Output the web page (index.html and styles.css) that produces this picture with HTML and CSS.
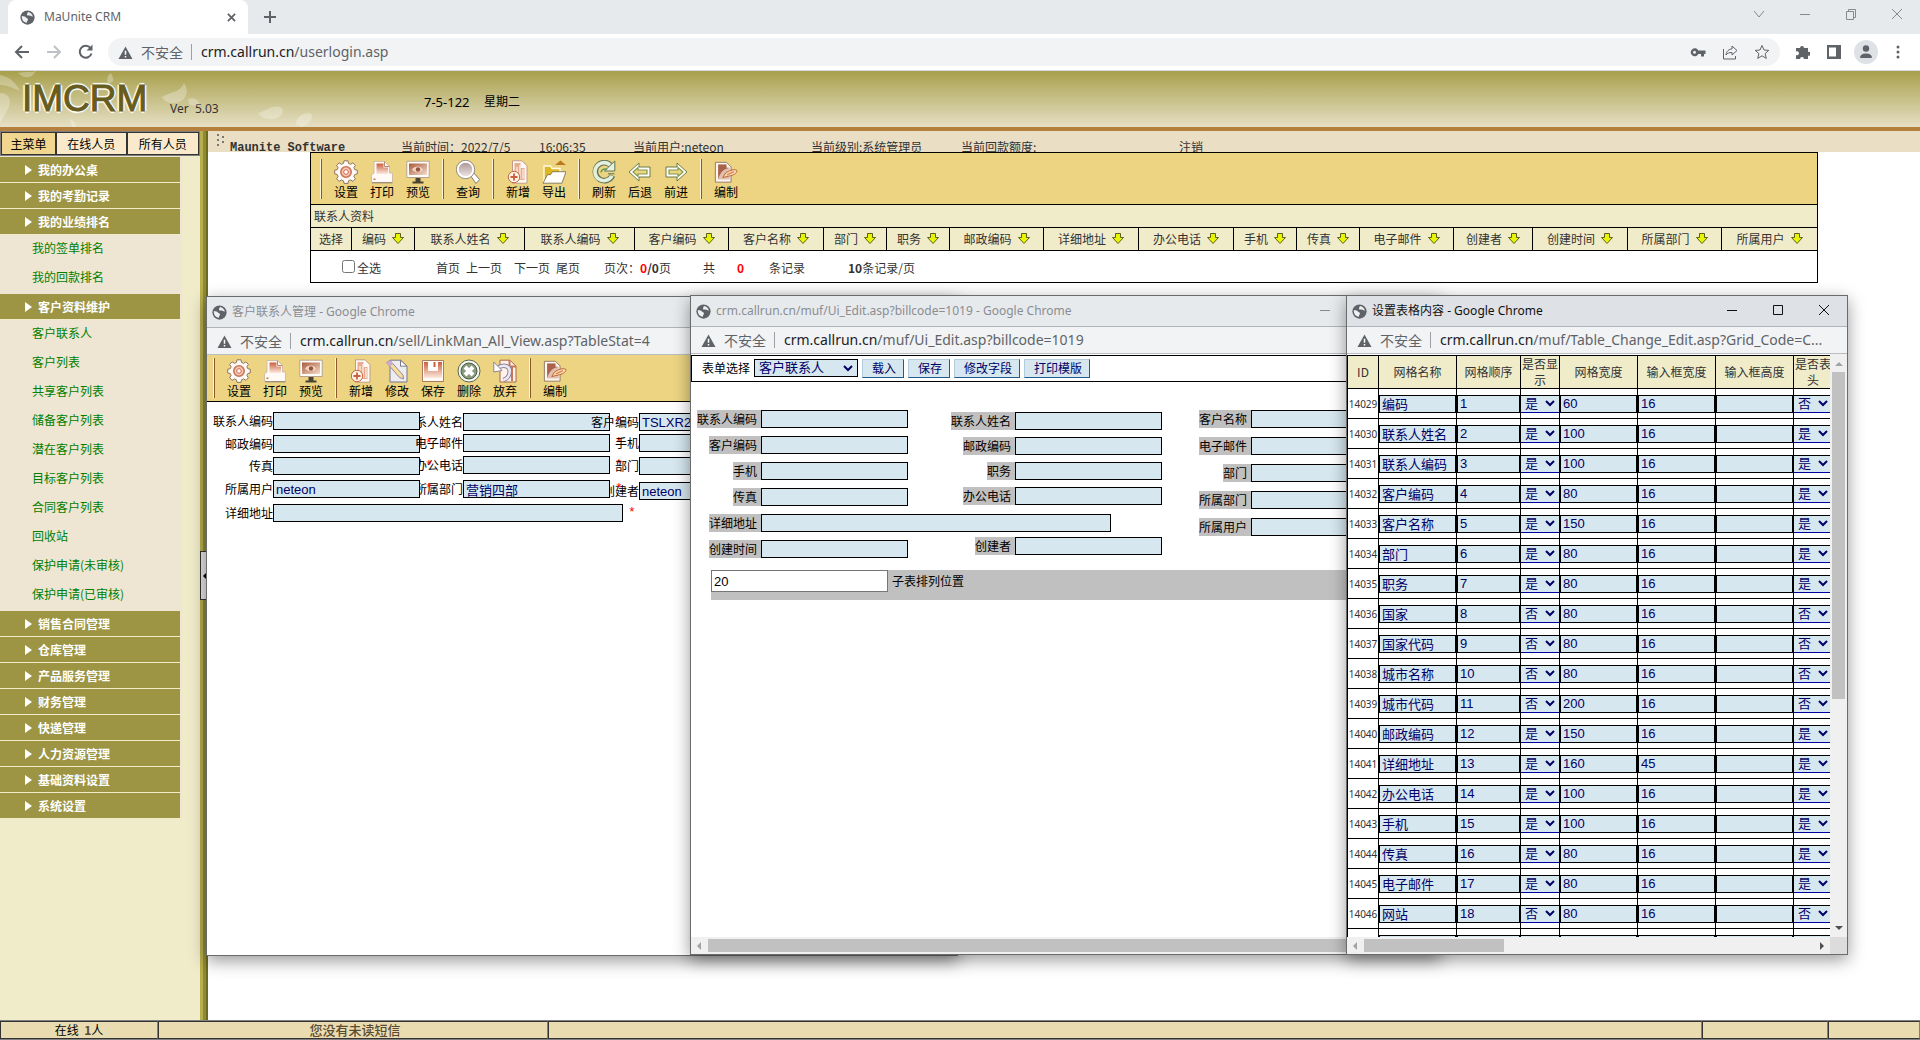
FILE: index.html
```html
<!DOCTYPE html>
<html lang="zh-CN">
<head>
<meta charset="utf-8">
<title>MaUnite CRM</title>
<link rel="stylesheet" href="styles.css">
</head>
<body>
<svg class="defs" aria-hidden="true">
  <defs>
    <linearGradient id="rust" x1="0" y1="0" x2="0" y2="1"><stop offset="0" stop-color="#c9613d"/><stop offset="1" stop-color="#fbe9df"/></linearGradient>
    <linearGradient id="lens" x1="0" y1="0" x2="0" y2="1"><stop offset="0" stop-color="#a89090"/><stop offset="1" stop-color="#f2eaea"/></linearGradient>
    <linearGradient id="screen" x1="0" y1="0" x2="1" y2="1"><stop offset="0" stop-color="#a85a3c"/><stop offset="1" stop-color="#f6dccb"/></linearGradient>
  </defs>
  <symbol id="globe" viewBox="0 0 16 16"><circle cx="8" cy="8" r="7.6" fill="#5f6368"/><path d="M2 6.500c2 .2 3.600 .5 4.300 1.500.6 1 2.200.6 2.200 2 0 1.200-1.200 1.400-1.300 3.600C4 13.500 1.600 10.500 2 6.500zM8.500 2.200c2.500.3 4.600 2.200 5.200 4.600-1.700.5-1.800-1-3.200-1-1.300 0-2.600.5-3-.6-.3-1 .7-1.600 1-3z" fill="#eef0f2"/></symbol>
  <symbol id="warn" viewBox="0 0 16 16"><path d="M8 1.500 15.500 15H.5z" fill="#5f6368"/><path d="M7.200 6h1.600v4.500H7.200zM7.200 11.700h1.600v1.600H7.200z" fill="#fff"/></symbol>
  <symbol id="sort" viewBox="0 0 12 11"><path d="M3.500.5h5v4h3L6 10.500.5 4.500h3z" fill="#e8f500" stroke="#5d5f1c"/></symbol>
  <symbol id="gear" viewBox="0 0 24 24"><g fill="#fffaf6" stroke="#8d7463" stroke-width="1"><path d="M10 .8h4l.6 2.600 2 .9 2.300-1.500 2.500 2.600-1.500 2.300.9 2 2.500.6v3.600l-2.500.6-.9 2 1.500 2.300-2.500 2.600-2.300-1.500-2 .9-.6 2.600h-4l-.6-2.600-2-.9-2.300 1.500-2.500-2.600 1.500-2.300-.9-2-2.500-.6v-3.600l2.500-.6.9-2-1.500-2.300 2.500-2.600 2.300 1.500 2-.9z"/></g><circle cx="12" cy="12" r="5.200" fill="#f7c9b4" stroke="#c9775a" stroke-width="1.600"/><circle cx="12" cy="12" r="2.300" fill="#fff" stroke="#d8644a"/></symbol>
  <symbol id="print" viewBox="0 0 24 24"><path d="M4 1.500h10.500l5 5V13H22.500v9.500H1.500V15L4 13z" fill="#fffaf6" stroke="#d3bda5"/><path d="M6.500 3.500h7v4h4.500V14h-11.500z" fill="url(#rust)"/><path d="M14.500 1.500v5h5" fill="none" stroke="#b98b72"/><path d="M3.500 18.500h2v1.500h-2z" fill="#c9775a"/><path d="M2 22.800h20.500" stroke="#8a7a6a"/></symbol>
  <symbol id="preview" viewBox="0 0 24 24"><path d="M.8 1.200h22.400v16.300H.8z" fill="#fffdf9" stroke="#b9a38e"/><path d="M3 3.500h18v11.500H3z" fill="url(#screen)"/><path d="M6 9.500c3-4 9-4 11 .5-3 3-8 3-11-.5z" fill="#f4d5c3"/><circle cx="12" cy="9.500" r="2.200" fill="#94553d"/><path d="M9.500 18h5v3.500h3v2h-11v-2h3z" fill="#4c4433"/></symbol>
  <symbol id="find" viewBox="0 0 24 24"><path d="M14.500 15.500l3-3 6 7-3.500 4z" fill="#fff" stroke="#867d76"/><circle cx="9.500" cy="9.500" r="8" fill="url(#lens)" stroke="#fff" stroke-width="2.400"/><circle cx="9.500" cy="9.500" r="9.200" fill="none" stroke="#8a7f78" stroke-width=".9"/></symbol>
  <symbol id="add" viewBox="0 0 24 24"><path d="M6.500.8h9.500l5 5v17.400H6.500z" fill="#fffaf6" stroke="#c49b80"/><path d="M8.500 3h6v5h4v12h-10z" fill="#e8ab90"/><path d="M11 7v12M14 5v14M17 9v10" stroke="#fff5ec" stroke-width="1.200"/><circle cx="8" cy="17" r="5.700" fill="#fff3ea" stroke="#c26a45"/><path d="M8 13.500v7M4.500 17h7" stroke="#c9613d" stroke-width="1.800"/></symbol>
  <symbol id="export" viewBox="0 0 24 24"><path d="M2 22.500V6h6.500l1.500 2.500h8V12" fill="#ddb823" stroke="#fffbe6" stroke-width="1.400"/><path d="M1 23.200h19l4-11.500H10.500l-2 3H5.500z" fill="#fffef8" stroke="#6f6650" stroke-width=".8"/><path d="M13 5l5.500-4.500L24 5z" fill="#b97a1e"/></symbol>
  <symbol id="refresh" viewBox="0 0 24 24"><path d="M20.500 15.500A9 9 0 1 1 18.500 5" fill="none" stroke="#5d7455" stroke-width="5.600"/><path d="M20 15.700A9 9 0 1 1 18.300 5.300" fill="none" stroke="#e4efdd" stroke-width="3.600"/><path d="M22.800 1v10H12.500z" fill="#e8f1e2" stroke="#5d7455"/><path d="M16 13.800h6.500" stroke="#5d7455"/><path d="M9 12.500a4 4 0 0 1 6-3" fill="none" stroke="#5d9a55" stroke-width="1.500"/></symbol>
  <symbol id="back" viewBox="0 0 24 24"><path d="M1 12 11 3v4h11v10H11v4z" fill="#fff" stroke="#6a7d45"/><path d="M5 12l5-4.500V10h9v4h-9v2.500z" fill="#ecd482" stroke="#7e9a45" stroke-width="1.200"/></symbol>
  <symbol id="forward" viewBox="0 0 24 24"><path d="M23 12 13 3v4H2v10h11v4z" fill="#fff" stroke="#6a7d45"/><path d="M19 12l-5-4.500V10H5v4h9v2.500z" fill="#ecd482" stroke="#7e9a45" stroke-width="1.200"/></symbol>
  <symbol id="compose" viewBox="0 0 26 24"><path d="M1.500 1.500h12l5 5V23h-17z" fill="#fff8f0" stroke="#8d7463"/><path d="M4.500 4h9v3.500H17V20H4.500z" fill="#e2bfae"/><path d="M4.500 4h9v3.500h3C10 9 6.500 13 4.500 20z" fill="#a8634a"/><path d="M9.500 18l3-5c4-2.500 9-4.500 12-3 1.500 2-2 5-6.500 6z" fill="#fbd9b8" stroke="#b4622f"/><path d="M14 15l7.500-3.500" stroke="#e08545" stroke-width="1.500"/></symbol>
  <symbol id="edit" viewBox="0 0 24 24"><path d="M5 1.200h10.500l6.500 6V23H5z" fill="#ededf0" stroke="#77778a"/><path d="M15.500 1.200v6H22z" fill="#fff" stroke="#77778a"/><path d="M1.500 3.500 5 1.500 18 16l.5 4-4-1.500z" fill="#f5df9a" stroke="#9a83a8"/><path d="M1.500 3.500 5 1.500l3 3.500-3 2.500z" fill="#caa9d6"/></symbol>
  <symbol id="save" viewBox="0 0 24 24"><path d="M1.500 1.500h21v21h-21z" fill="#fffaf4" stroke="#b07a5e"/><path d="M3 3h4v9h10V3h4v16H3z" fill="url(#rust)"/><path d="M8.500 2h7v8.500h-7z" fill="#fff"/><path d="M12.500 3h2v5h-2z" fill="#c9613d"/></symbol>
  <symbol id="remove" viewBox="0 0 24 24"><circle cx="12" cy="12" r="11" fill="#f7f8f2" stroke="#59684c"/><circle cx="12" cy="12" r="8" fill="#8a9a7c" stroke="#4c5a42"/><path d="M8 8l8 8M16 8l-8 8" stroke="#fff" stroke-width="4"/></symbol>
  <symbol id="undo" viewBox="0 0 24 24"><path d="M7 1.200h10l6 6V23H7z" fill="#fff3ea" stroke="#a6664a"/><path d="M16.500 1.200v6.300H23M19 8v14" fill="none" stroke="#c9775a" stroke-width="2"/><path d="M4 9c8-5 14-1 12.500 5-.5 4-3 6-6 7" fill="none" stroke="#8a8398" stroke-width="4.500"/><path d="M4 9c8-5 14-1 12.500 5-.5 4-3 6-6 7" fill="none" stroke="#eeeaf4" stroke-width="2.500"/><path d="M.8 3v10L9 11.500z" fill="#fff" stroke="#8a8398"/></symbol>
</svg>

<header class="browser">
  <div class="tabstrip">
    <div class="tab"><svg class="favicon"><use href="#globe"/></svg><span class="tab-title">MaUnite CRM</span>
      <button class="glyph" aria-label="关闭标签页"><svg viewBox="0 0 10 10"><path d="M1 1l8 8M9 1 1 9"/></svg></button></div>
    <button class="glyph new-tab" aria-label="新标签页"><svg viewBox="0 0 12 12"><path d="M6 0v12M0 6h12"/></svg></button>
    <div class="caption dim">
      <button aria-label="搜索标签页"><svg viewBox="0 0 12 12"><path d="M1 3l5 6 5-6"/></svg></button>
      <button aria-label="最小化"><svg viewBox="0 0 12 12"><path d="M1 6.500h10"/></svg></button>
      <button aria-label="还原"><svg viewBox="0 0 12 12"><path d="M1.500 3.500h7v8h-7zM3.500 3.500v-2h7v8h-2"/></svg></button>
      <button aria-label="关闭"><svg viewBox="0 0 12 12"><path d="M1 1l10 10M11 1 1 11"/></svg></button>
    </div>
  </div>
  <div class="navbar">
    <button class="nav" aria-label="后退"><svg viewBox="0 0 16 16"><path d="M15 8H2M8 2 2 8l6 6"/></svg></button>
    <button class="nav off" aria-label="前进"><svg viewBox="0 0 16 16"><path d="M1 8h13M8 2l6 6-6 6"/></svg></button>
    <button class="nav" aria-label="重新加载"><svg viewBox="0 0 16 16"><path d="M13.500 9.500A6 6 0 1 1 12.500 4"/><path class="solid" d="M14.500.5v6h-6z"/></svg></button>
    <div class="omnibox">
      <svg class="warn"><use href="#warn"/></svg><span class="insecure">不安全</span><span class="url"><b>crm.callrun.cn</b>/userlogin.asp</span>
      <button class="nav push" aria-label="密码"><svg viewBox="0 0 16 16"><path class="solid" d="M8.300 6.500A4 4 0 1 0 8.300 10H11v2.500h3V10h1.500V6.500zM4.500 9.700a1.500 1.500 0 1 1 0-3 1.500 1.500 0 0 1 0 3z"/></svg></button>
      <button class="nav" aria-label="分享"><svg viewBox="0 0 16 16"><path class="thin" d="M1.500 5v10h12v-3M4 11c.5-4 3-6 6-6V2l5 4.500-5 4.500V8.500C7 8.500 5.500 9 4 11z"/></svg></button>
      <button class="nav" aria-label="收藏"><svg viewBox="0 0 16 16"><path class="thin" d="M8 1.500l2 4.500 4.800.4-3.700 3.200 1.200 4.800L8 11.800l-4.300 2.600 1.200-4.800L1.200 6.400 6 6z"/></svg></button>
    </div>
    <button class="nav" aria-label="扩展程序"><svg viewBox="0 0 16 16"><path class="solid" d="M2 4h4a2 2 0 1 1 4 0h4v4a2 2 0 1 1 0 3.500V15h-4a2 2 0 1 0-4 0H2v-4a2 2 0 1 0 0-3.500z"/></svg></button>
    <button class="nav" aria-label="侧边栏"><svg viewBox="0 0 16 16"><path class="solid" d="M1 1h14v14H1zM3 3.500v9h7v-9z" fill-rule="evenodd"/></svg></button>
    <button class="nav avatar" aria-label="用户"><svg viewBox="0 0 16 16"><circle class="solid" cx="8" cy="4.500" r="3.200"/><path class="solid" d="M2 14c0-3 2-4.500 6-4.500s6 1.500 6 4.500z"/></svg></button>
    <button class="nav" aria-label="菜单"><svg viewBox="0 0 16 16"><circle class="solid" cx="8" cy="3" r="1.500"/><circle class="solid" cx="8" cy="8" r="1.500"/><circle class="solid" cx="8" cy="13" r="1.500"/></svg></button>
  </div>
</header>

<div class="banner">
  <svg class="petals" viewBox="0 0 330 56" aria-hidden="true"><g fill="#fff" opacity=".28"><path d="M0 4c10 2 16 8 20 16C12 16 4 14 0 14zM18 2c8-2 14 0 18-2-4 8-12 8-18 2zM0 22c10 0 12 8 8 16l-8 14z"/><path d="M108 12c-2-4 0-8 3-10 3 6 4 10-3 10zM162 26c10-6 18-4 22-14 6 8 2 20-10 20-6 0-10-2-12-6zM188 28c6-2 10 0 12 6-8 2-12 0-12-6zM258 42c8-2 14-8 22-6 6 2 2 12-8 12-6 0-12-2-14-6zM296 54c0-8 6-12 14-12 6 4-2 12-8 14zM70 48c4 2 6 4 6 8h-4z"/></g></svg>
  <h1 class="logo">IMCRM</h1>
  <span class="version">Ver&nbsp; 5.03</span>
  <span class="date">7-5-122</span><span>星期二</span>
</div>

<main class="workspace">
  <aside class="sidebar">
    <div class="side-tabs"><button class="on">主菜单</button><button>在线人员</button><button>所有人员</button></div>
    <nav class="menu">
      <h2>我的办公桌</h2>
      <h2>我的考勤记录</h2>
      <h2>我的业绩排名</h2>
      <ul><li><a href="#">我的签单排名</a></li><li><a href="#">我的回款排名</a></li></ul>
      <h2>客户资料维护</h2>
      <ul><li><a href="#">客户联系人</a></li><li><a href="#">客户列表</a></li><li><a href="#">共享客户列表</a></li><li><a href="#">储备客户列表</a></li><li><a href="#">潜在客户列表</a></li><li><a href="#">目标客户列表</a></li><li><a href="#">合同客户列表</a></li><li><a href="#">回收站</a></li><li><a href="#">保护申请(未审核)</a></li><li><a href="#">保护申请(已审核)</a></li></ul>
      <h2>销售合同管理</h2>
      <h2>仓库管理</h2>
      <h2>产品服务管理</h2>
      <h2>财务管理</h2>
      <h2>快递管理</h2>
      <h2>人力资源管理</h2>
      <h2>基础资料设置</h2>
      <h2>系统设置</h2>
    </nav>
  </aside>
  <div class="splitter"><button aria-label="收起菜单"></button></div>

  <section class="content">
    <div class="infobar">
      <svg class="grip" viewBox="0 0 8 12"><path d="M0 0h2v2H0zM0 5h2v2H0zM0 10h2v2H0zM5 2h2v2H5zM5 7h2v2H5z"/></svg>
      <b class="brand">Maunite Software</b>
      <span class="now">当前时间：2022/7/5</span><span class="clock">16:06:35</span>
      <span class="user">当前用户:neteon</span><span class="level">当前级别:系统管理员</span><span class="quota">当前回款额度:</span><a href="#">注销</a>
    </div>

    <div class="panel">
      <div class="toolbar">
        <div class="group"><button><svg><use href="#gear"/></svg>设置</button><button><svg><use href="#print"/></svg>打印</button><button><svg><use href="#preview"/></svg>预览</button></div>
        <div class="group"><button><svg><use href="#find"/></svg>查询</button></div>
        <div class="group"><button><svg><use href="#add"/></svg>新增</button><button><svg><use href="#export"/></svg>导出</button></div>
        <div class="group"><button><svg><use href="#refresh"/></svg>刷新</button><button><svg><use href="#back"/></svg>后退</button><button><svg><use href="#forward"/></svg>前进</button></div>
        <div class="group"><button><svg><use href="#compose"/></svg>编制</button></div>
      </div>
      <div class="panel-title">联系人资料</div>
      <table class="columns">
        <colgroup><col class="w41"><col class="w63"><col class="w110"><col class="w110"><col class="w94"><col class="w95"><col class="w63"><col class="w63"><col class="w94"><col class="w95"><col class="w95"><col class="w63"><col class="w63"><col class="w94"><col class="w79"><col class="w95"><col class="w94"><col class="w95"></colgroup>
        <thead><tr><th>选择</th><th>编码<svg><use href="#sort"/></svg></th><th>联系人姓名<svg><use href="#sort"/></svg></th><th>联系人编码<svg><use href="#sort"/></svg></th><th>客户编码<svg><use href="#sort"/></svg></th><th>客户名称<svg><use href="#sort"/></svg></th><th>部门<svg><use href="#sort"/></svg></th><th>职务<svg><use href="#sort"/></svg></th><th>邮政编码<svg><use href="#sort"/></svg></th><th>详细地址<svg><use href="#sort"/></svg></th><th>办公电话<svg><use href="#sort"/></svg></th><th>手机<svg><use href="#sort"/></svg></th><th>传真<svg><use href="#sort"/></svg></th><th>电子邮件<svg><use href="#sort"/></svg></th><th>创建者<svg><use href="#sort"/></svg></th><th>创建时间<svg><use href="#sort"/></svg></th><th>所属部门<svg><use href="#sort"/></svg></th><th>所属用户<svg><use href="#sort"/></svg></th></tr></thead>
      </table>
      <div class="pager">
        <label class="all"><input type="checkbox">全选</label>
        <span class="links"><a href="#">首页</a><a href="#">上一页</a></span><span class="links"><a href="#">下一页</a><a href="#">尾页</a></span>
        <span class="pages">页次：<b class="red">0</b><b>/0</b>页</span><span class="sum">共</span><b class="red">0</b><span class="rec">条记录</span><span class="per"><b>10</b>条记录/页</span>
      </div>
    </div>
  </section>
</main>

<footer class="status"><div class="s-online">在线&nbsp; <b>1</b>人</div><div class="s-msg">您没有未读短信</div><div class="s-fill"></div><div class="s-a"></div><div class="s-b"></div></footer>

<section class="window win-contact">
  <div class="titlebar"><svg class="favicon"><use href="#globe"/></svg><span class="cn">客户联系人管理</span><span>&nbsp;- Google Chrome</span></div>
  <div class="address"><svg class="warn"><use href="#warn"/></svg><span class="insecure">不安全</span><span class="url"><b>crm.callrun.cn</b>/sell/LinkMan_All_View.asp?TableStat=4</span></div>
  <div class="toolbar">
    <div class="group"><button><svg><use href="#gear"/></svg>设置</button><button><svg><use href="#print"/></svg>打印</button><button><svg><use href="#preview"/></svg>预览</button></div>
    <div class="group"><button><svg><use href="#add"/></svg>新增</button><button><svg><use href="#edit"/></svg>修改</button><button><svg><use href="#save"/></svg>保存</button><button><svg><use href="#remove"/></svg>删除</button><button><svg><use href="#undo"/></svg>放弃</button></div>
    <div class="group"><button><svg><use href="#compose"/></svg>编制</button></div>
  </div>
  <form class="free-form">
    <div class="field mid r1"><label for="c-name">联系人姓名</label><input id="c-name"><i>*</i></div>
    <div class="field left l1"><label for="c-code">联系人编码</label><input id="c-code"></div>
    <div class="field right r1"><label for="c-cust">客户编码</label><input id="c-cust" value="TSLXR2022"></div>
    <div class="field left l2"><label for="c-zip">邮政编码</label><input id="c-zip"><i>*</i></div>
    <div class="field mid r2"><label for="c-mail">电子邮件</label><input id="c-mail"><i>*</i></div>
    <div class="field right r2"><label for="c-cell">手机</label><input id="c-cell"></div>
    <div class="field mid r3"><label for="c-tel">办公电话</label><input id="c-tel"><i>*</i></div>
    <div class="field left l3"><label for="c-fax">传真</label><input id="c-fax"><i>*</i></div>
    <div class="field right l3"><label for="c-dept">部门</label><input id="c-dept"></div>
    <div class="field right l4"><label for="c-maker">创建者</label><input id="c-maker" value="neteon"></div>
    <div class="field mid r4"><label for="c-owndept">所属部门</label><input id="c-owndept" value="营销四部"><i>*</i></div>
    <div class="field left r4"><label for="c-owner">所属用户</label><input id="c-owner" value="neteon"><i>*</i></div>
    <div class="field left l5"><label for="c-addr">详细地址</label><input id="c-addr" class="wide"><i>*</i></div>
  </form>
</section>

<section class="window win-form">
  <div class="titlebar"><svg class="favicon"><use href="#globe"/></svg><span>crm.callrun.cn/muf/Ui_Edit.asp?billcode=1019 - Google Chrome</span>
    <div class="caption dim"><button aria-label="最小化"><svg viewBox="0 0 12 12"><path d="M1 6.500h10"/></svg></button><button aria-label="最大化"><svg viewBox="0 0 12 12"><path d="M1.500 1.500h9v9h-9z"/></svg></button><button aria-label="关闭"><svg viewBox="0 0 12 12"><path d="M1 1l10 10M11 1 1 11"/></svg></button></div></div>
  <div class="address"><svg class="warn"><use href="#warn"/></svg><span class="insecure">不安全</span><span class="url"><b>crm.callrun.cn</b>/muf/Ui_Edit.asp?billcode=1019</span></div>
  <div class="picker"><label for="bill">表单选择</label><select id="bill"><option>客户联系人</option></select><button>载入</button><button>保存</button><button>修改字段</button><button>打印模版</button></div>
  <form class="designer">
    <div class="stack s1">
      <div class="row"><label for="d1">联系人编码</label><input id="d1"></div>
      <div class="row"><label for="d2">客户编码</label><input id="d2"></div>
      <div class="row"><label for="d3">手机</label><input id="d3"></div>
      <div class="row"><label for="d4">传真</label><input id="d4"></div>
      <div class="row row-wide"><label for="d5">详细地址</label><input id="d5" class="wide"></div>
      <div class="row"><label for="d6">创建时间</label><input id="d6"></div>
    </div>
    <div class="stack s2">
      <div class="row"><label for="d7">联系人姓名</label><input id="d7"></div>
      <div class="row"><label for="d8">邮政编码</label><input id="d8"></div>
      <div class="row"><label for="d9">职务</label><input id="d9"></div>
      <div class="row"><label for="d10">办公电话</label><input id="d10"></div>
      <div class="row"></div>
      <div class="row"><label for="d11">创建者</label><input id="d11"></div>
    </div>
    <div class="stack s3">
      <div class="row"><label for="d12">客户名称</label><input id="d12"></div>
      <div class="row"><label for="d13">电子邮件</label><input id="d13"></div>
      <div class="row"><label for="d14">部门</label><input id="d14"></div>
      <div class="row"><label for="d15">所属部门</label><input id="d15"></div>
      <div class="row"><label for="d16">所属用户</label><input id="d16"></div>
    </div>
  </form>
  <div class="subtable"><input id="subpos" value="20"><label for="subpos">子表排列位置</label></div>
  <div class="hscroll"><span class="arrow-left"></span><span class="thumb long"></span></div>
</section>

<section class="window win-grid active">
  <div class="titlebar"><svg class="favicon"><use href="#globe"/></svg><span class="cn">设置表格内容</span><span>&nbsp;- Google Chrome</span>
    <div class="caption"><button aria-label="最小化"><svg viewBox="0 0 12 12"><path d="M1 6.500h10"/></svg></button><button aria-label="最大化"><svg viewBox="0 0 12 12"><path d="M1.500 1.500h9v9h-9z"/></svg></button><button aria-label="关闭"><svg viewBox="0 0 12 12"><path d="M1 1l10 10M11 1 1 11"/></svg></button></div></div>
  <div class="address"><svg class="warn"><use href="#warn"/></svg><span class="insecure">不安全</span><span class="url"><b>crm.callrun.cn</b>/muf/Table_Change_Edit.asp?Grid_Code=C...</span></div>
  <div class="scroller">
    <div class="viewport">
      <table class="grid">
        <colgroup><col class="g31"><col class="g78"><col class="g64"><col class="g39"><col class="g78"><col class="g78"><col class="g78"><col class="g39"></colgroup>
        <thead><tr><th>ID</th><th>网格名称</th><th>网格顺序</th><th>是否显示</th><th>网格宽度</th><th>输入框宽度</th><th>输入框高度</th><th>是否表头</th></tr></thead>
        <tbody id="rows"></tbody>
      </table>
    </div>
    <div class="vscroll"><span class="arrow-up"></span><span class="thumb"></span><span class="arrow-down"></span></div>
  </div>
  <div class="hscroll"><span class="arrow-left"></span><span class="thumb"></span><span class="arrow-right"></span><span class="corner"></span></div>
</section>
<script src="grid.js"></script>
</body>
</html>
```

FILE: styles.css
```css
* { box-sizing: border-box; }

:root {
  --cn: "Noto Sans CJK SC", sans-serif;
  --ui: "Noto Sans", "Noto Sans CJK SC", sans-serif;
  --field: #d6e7ef;
  --navy: #000066;
}

body {
  margin: 0;
  height: 100vh;
  overflow: hidden;
  position: relative;
  display: flex;
  flex-direction: column;
  background: #fff;
  color: #333;
  font: 12px/16px var(--cn);
}

button {
  margin: 0;
  padding: 0;
  border: 0;
  background: none;
  font: inherit;
  color: inherit;
}

a { color: inherit; text-decoration: none; }
.defs { position: absolute; width: 0; height: 0; }

/* Browser frame */
.tabstrip {
  height: 34px;
  display: flex;
  align-items: center;
  padding-left: 8px;
  background: #e7eaed;
}
.tab {
  align-self: stretch;
  width: 240px;
  padding: 0 12px;
  display: flex;
  align-items: center;
  border-radius: 8px 8px 0 0;
  background: #fff;
  color: #5f6368;
  font-family: var(--ui);
}
.favicon { width: 15px; height: 15px; flex: none; }
.tab-title { flex: 1; margin-left: 9px; }
.glyph svg { display: block; width: 9px; height: 9px; fill: none; stroke: #5f6368; stroke-width: 2; }
.new-tab { margin-left: 16px; }
.new-tab svg { width: 12px; height: 12px; }

.caption { display: flex; margin-left: auto; height: 28px; align-self: flex-start; }
.caption button { width: 46px; display: grid; place-items: center; }
.caption svg { width: 12px; height: 12px; fill: none; stroke: #111; }
.caption.dim svg { stroke: #86898d; }

.navbar {
  height: 37px;
  display: flex;
  align-items: center;
  padding: 0 6px;
  border-bottom: 1px solid #d5d8dc;
  background: #fff;
}
.nav { width: 32px; height: 28px; display: grid; place-items: center; }
.nav svg { width: 16px; height: 16px; fill: none; stroke: #5f6368; stroke-width: 2; }
.nav .solid { fill: #5f6368; stroke: none; }
.nav .thin { stroke-width: 1; }
.nav.off svg { stroke: #bdc1c6; }
.nav.avatar svg { width: 24px; height: 24px; padding: 4px; border-radius: 12px; background: #dee1e6; }
.omnibox {
  flex: 1;
  height: 28px;
  margin: 0 6px;
  padding: 0 2px 0 10px;
  display: flex;
  align-items: center;
  border-radius: 14px;
  background: #f1f3f4;
}
.push { margin-left: auto; }
.warn { width: 15px; height: 15px; flex: none; }
.insecure { margin-left: 8px; padding-right: 8px; border-right: 1px solid #9aa0a6; font-size: 14px; line-height: 16px; color: #5f6368; white-space: nowrap; }
.url { margin-left: 9px; font-family: var(--ui); font-size: 14px; color: #5f6368; white-space: nowrap; }
.url b { font-weight: 400; color: #202124; }

/* Application banner */
.banner {
  position: relative;
  height: 60px;
  flex: none;
  display: flex;
  align-items: center;
  border-bottom: 4px solid #b5803e;
  background: linear-gradient(#a8a04c, #e6dfc4);
  color: #000;
  font: 13px/16px var(--ui);
}
.petals { position: absolute; left: 0; top: 0; width: 330px; height: 56px; }
.logo {
  margin: 0 0 0 22px;
  width: 148px;
  font: 37px/52px "Liberation Sans", sans-serif;
  color: #665c1e;
  -webkit-text-stroke: 1px #665c1e;
  text-shadow: 2px 0 1px #fff, -2px 0 1px #fff, 0 2px 1px #fff, 0 -2px 1px #fff;
}
.version { width: 254px; padding-top: 20px; font-size: 12px; color: #333; }
.date { width: 60px; }
.banner span:not(.version) { padding-top: 6px; }
.banner span:last-child { font-size: 12px; }

/* Workspace */
.workspace { flex: 1; min-height: 0; display: flex; }
.sidebar { width: 200px; flex: none; background: #f0ecca; }
.side-tabs { display: flex; height: 25px; border: 1px solid #808080; background: #808080; }
.side-tabs button { flex: 73; border: 1px solid #333; background: #faeacb; color: #000; }
.side-tabs button:first-child { flex: 55; }
.side-tabs button:nth-child(2) { flex: 71; }
.side-tabs .on { background: #f0d68e; }
.menu { width: 182px; padding-top: 1px; background: #eee5d3; }
.menu h2 {
  margin: 0;
  width: 180px;
  height: 26px;
  padding-left: 25px;
  display: flex;
  align-items: center;
  border-bottom: 1px solid #f0ecca;
  background: #9d9543;
  color: #fff;
  font-size: 12px;
}
.menu h2::before { content: ""; margin-right: 6px; border: solid transparent; border-width: 5px 0 5px 7px; border-left-color: #fff; }
.menu ul { margin: 0; padding: 0 0 1px 32px; list-style: none; }
.menu li { height: 29px; line-height: 26px; color: #008000; }
.splitter {
  width: 8px;
  flex: none;
  display: flex;
  align-items: center;
  background: linear-gradient(90deg, #b7ae4e 0 3px, #8f8a36 3px 6px, #6f6b1e 6px);
}
.splitter button { width: 8px; height: 49px; border: 1px solid #333; background: #e4e4e4; display: flex; align-items: center; justify-content: flex-end; }
.splitter button::before { content: ""; border: solid transparent; border-width: 4px 4px 4px 0; border-right-color: #000; }

.content { flex: 1; min-width: 0; }
.infobar { height: 21px; padding: 8px 0 0 9px; display: flex; overflow: hidden; background: #eadfc4; white-space: nowrap; }
.grip { width: 8px; height: 12px; margin-top: -5px; fill: #777; flex: none; }
.brand { width: 171px; margin-left: 5px; font: bold 12px/18px "Liberation Mono", monospace; }
.now { width: 138px; }
.clock { width: 94px; }
.user { width: 178px; }
.level { width: 150px; }
.quota { width: 218px; }

.panel { margin: 0 102px; border: 1px solid #000; }
.toolbar { height: 52px; padding: 6px 0 5px 9px; display: flex; border-bottom: 1px solid #000; background: #ecd482; }
.group { display: flex; padding: 0 6px; border-left: 1px solid #8a5a2c; box-shadow: -1px 0 0 #fff6d8; margin-left: 1px; }
.group button { width: 36px; display: flex; flex-direction: column; align-items: center; color: #000; line-height: 14px; }
.group svg { width: 24px; height: 24px; margin: 1px 0; }
.panel-title { height: 23px; padding-left: 3px; line-height: 22px; border-bottom: 1px solid #000; background: #f0ecca; }
.columns { width: 100%; table-layout: fixed; border-spacing: 0; }
.columns th { height: 23px; padding: 0; border-right: 1px solid #000; border-bottom: 1px solid #000; background: #f0ecca; font-weight: 400; white-space: nowrap; }
.columns th:last-child { border-right: 0; }
.columns svg { width: 12px; height: 11px; margin-left: 6px; }
.w41 { width: 41px; }
.w63 { width: 63px; }
.w79 { width: 79px; }
.w94 { width: 94px; }
.w95 { width: 95px; }
.w110 { width: 110px; }
.pager { height: 31px; padding: 3px 0 0 31px; display: flex; align-items: center; }
.pager .red { color: #f00; }
.all { width: 94px; display: flex; align-items: center; }
.all input { width: 13px; height: 13px; margin: 0 2px 4px 0; }
.links { display: flex; gap: 6px; margin-right: 12px; }
.pages { margin: 0 32px 0 12px; }
.sum { width: 34px; }
.rec { margin: 0 43px 0 25px; }

/* Status bar */
.status { height: 20px; flex: none; display: flex; border: solid #808080; border-width: 1px 0; background: #e8dcb0; text-align: center; line-height: 16px; color: #000; }
.status div { border: 1px solid #333; border-right-color: #808080; }
.status b { color: #5a4a30; }
.s-online { width: 158px; }
.s-msg { width: 390px; padding-left: 4px; font-size: 13px; font-weight: 500; color: #5a4a30; }
.s-fill { flex: 1; }
.s-a { width: 126px; }
.s-b { width: 92px; }

/* Pop-up windows on the desktop */
.window {
  position: absolute;
  display: flex;
  flex-direction: column;
  overflow: hidden;
  border: 1px solid #6b6b6b;
  background: #fff;
  box-shadow: 0 5px 16px rgba(0, 0, 0, .4);
}
.win-contact { left: 206px; top: 296px; width: 752px; height: 660px; }
.win-form { left: 690px; top: 295px; width: 751px; height: 660px; }
.win-grid { left: 1346px; top: 295px; width: 502px; height: 660px; }
.titlebar { height: 31px; flex: none; padding-left: 5px; display: flex; align-items: center; border-bottom: 1px solid #b0b3b7; background: #e7eaed; color: #8a8d91; font-family: var(--ui); white-space: nowrap; }
.titlebar .favicon + span { margin-left: 5px; }
.active .titlebar { background: #dee1e6; color: #111; }
.address { height: 27px; flex: none; padding-left: 10px; display: flex; align-items: center; border-bottom: 1px solid #b9bcc0; background: #f1f3f4; }
.win-contact .toolbar { height: 47px; flex: none; padding: 3px 0 3px 6px; }

input, select { font: 13px/16px "Liberation Sans", "Noto Sans CJK SC", sans-serif; color: var(--navy); }
.window input { width: 147px; height: 18px; padding: 0 2px; border: 1px solid #000; border-radius: 0; background: var(--field); flex: none; }
.window .wide { width: 350px; }
select {
  appearance: none;
  height: 18px;
  border: 1px solid #000;
  border-radius: 0;
  background: var(--field) url("data:image/svg+xml,%3Csvg xmlns='http://www.w3.org/2000/svg' width='10' height='7'%3E%3Cpath d='M1 1l4 4 4-4' fill='none' stroke='%23000066' stroke-width='2'/%3E%3C/svg%3E") no-repeat right 4px center;
}

/* Freely placed contact form */
.free-form { position: relative; flex: 1; color: #000; }
.field { position: absolute; display: flex; align-items: center; }
.field label { width: 65px; text-align: right; white-space: nowrap; }
.field i { margin-left: 5px; font: 13px/10px "Liberation Mono", monospace; color: #f00; }
.left { left: 1px; }
.mid { left: 191px; }
.right { left: 367px; }
.l1 { top: 10px; }
.l2 { top: 33px; }
.l3 { top: 55px; }
.l4 { top: 80px; }
.l5 { top: 102px; }
.r1 { top: 11px; }
.r2 { top: 32px; }
.r3 { top: 54px; }
.r4 { top: 78px; }

/* Form designer */
.picker { height: 27px; flex: none; margin-top: 1px; padding: 0 0 1px 10px; display: flex; align-items: center; gap: 4px; border: 1px solid #000; color: #000; }
.picker select { width: 104px; padding-left: 4px; }
.picker button { height: 19px; padding: 0 7px 0 9px; border: 1px solid; border-color: #b3cddd #24598c #24598c #b3cddd; background: var(--field); color: var(--navy); white-space: nowrap; }
.designer { flex: none; padding: 28px 0 0 6px; display: grid; grid-template-columns: 254px 246px 1fr; color: #000; }
.stack { display: flex; flex-direction: column; width: 0; }
.s1 { gap: 8px; }
.s2 { gap: 7px; padding-top: 2px; }
.s3 { gap: 9px; }
.row { width: 211px; height: 18px; display: flex; justify-content: flex-end; }
.row label { padding-right: 4px; line-height: 18px; white-space: nowrap; background: #c0c0c0; }
.row-wide { width: 414px; }
.s3 .row { width: 201px; }
.subtable { height: 30px; flex: none; margin: 12px 0 0 20px; padding-bottom: 8px; display: flex; align-items: center; gap: 4px; background: #c0c0c0; color: #000; }
.window .subtable input { width: 177px; height: 22px; border-color: #767676; background: #fff; color: #000; }

/* Scroll bars */
.hscroll { height: 17px; flex: none; margin-top: auto; display: flex; align-items: center; background: #f0f0f0; }
.hscroll .thumb { width: 140px; height: 13px; margin-left: 7px; background: #c1c1c1; }
.hscroll .long { width: 640px; }
.arrow-left { margin-left: 6px; border: solid transparent; border-width: 4px 4px 4px 0; border-right-color: #a3a3a3; }
.arrow-right { margin: 0 6px 0 auto; border: solid transparent; border-width: 4px 0 4px 4px; border-left-color: #505050; }
.corner { width: 17px; height: 17px; background: #dcdcdc; }
.vscroll { width: 17px; display: flex; flex-direction: column; align-items: center; background: #f0f0f0; }
.vscroll .thumb { width: 13px; height: 327px; margin-top: 6px; background: #c1c1c1; }
.arrow-up { margin-top: 8px; border: solid transparent; border-width: 0 4px 4px; border-bottom-color: #a3a3a3; }
.arrow-down { margin: auto 0 7px; border: solid transparent; border-width: 4px 4px 0; border-top-color: #505050; }

/* Column settings table */
.scroller { flex: 1; min-height: 0; display: flex; }
.viewport { flex: 1; overflow: hidden; padding-top: 1px; }
.grid { width: 486px; table-layout: fixed; border-spacing: 0; border: solid #000; border-width: 1px 0 0 1px; }
.grid th, .grid td { padding: 0; border: solid #000; border-width: 0 1px 1px 0; }
.grid th { height: 33px; background: #f0ecca; font-weight: 400; }
.grid td { height: 30px; font: 10px/16px var(--ui); text-align: center; white-space: nowrap; }
.window .grid input, .grid select { display: block; width: 100%; }
.grid select { padding-left: 4px; border-width: 1px 0; border-bottom-color: #0000a0; }
.g31 { width: 31px; }
.g39 { width: 39px; }
.g64 { width: 64px; }
.g78 { width: 78px; }
```

FILE: grid.js
```js
// id, name, order, shown, column width, box width, box height, in header
const columns = [
  [14029, '编码', 1, '是', 60, 16, '', '否'],
  [14030, '联系人姓名', 2, '是', 100, 16, '', '是'],
  [14031, '联系人编码', 3, '是', 100, 16, '', '是'],
  [14032, '客户编码', 4, '是', 80, 16, '', '是'],
  [14033, '客户名称', 5, '是', 150, 16, '', '是'],
  [14034, '部门', 6, '是', 80, 16, '', '是'],
  [14035, '职务', 7, '是', 80, 16, '', '是'],
  [14036, '国家', 8, '否', 80, 16, '', '否'],
  [14037, '国家代码', 9, '否', 80, 16, '', '否'],
  [14038, '城市名称', 10, '否', 80, 16, '', '否'],
  [14039, '城市代码', 11, '否', 200, 16, '', '否'],
  [14040, '邮政编码', 12, '是', 150, 16, '', '是'],
  [14041, '详细地址', 13, '是', 160, 45, '', '是'],
  [14042, '办公电话', 14, '是', 100, 16, '', '是'],
  [14043, '手机', 15, '是', 100, 16, '', '是'],
  [14044, '传真', 16, '是', 80, 16, '', '是'],
  [14045, '电子邮件', 17, '是', 80, 16, '', '是'],
  [14046, '网站', 18, '否', 80, 16, '', '否'],
  ['', '', '', '', '', '', '', '']
];
const heads = ['ID', '网格名称', '网格顺序', '是否显示', '网格宽度', '输入框宽度', '输入框高度', '是否表头'];

document.getElementById('rows').innerHTML = columns.map(row => '<tr>' + row.map((value, i) => {
  if (i === 0) return `<td>${value}</td>`;
  if (i === 3 || i === 7) return `<td><select aria-label="${heads[i]}"><option>${value}</option></select></td>`;
  return `<td><input aria-label="${heads[i]}" value="${value}"></td>`;
}).join('') + '</tr>').join('');
```
